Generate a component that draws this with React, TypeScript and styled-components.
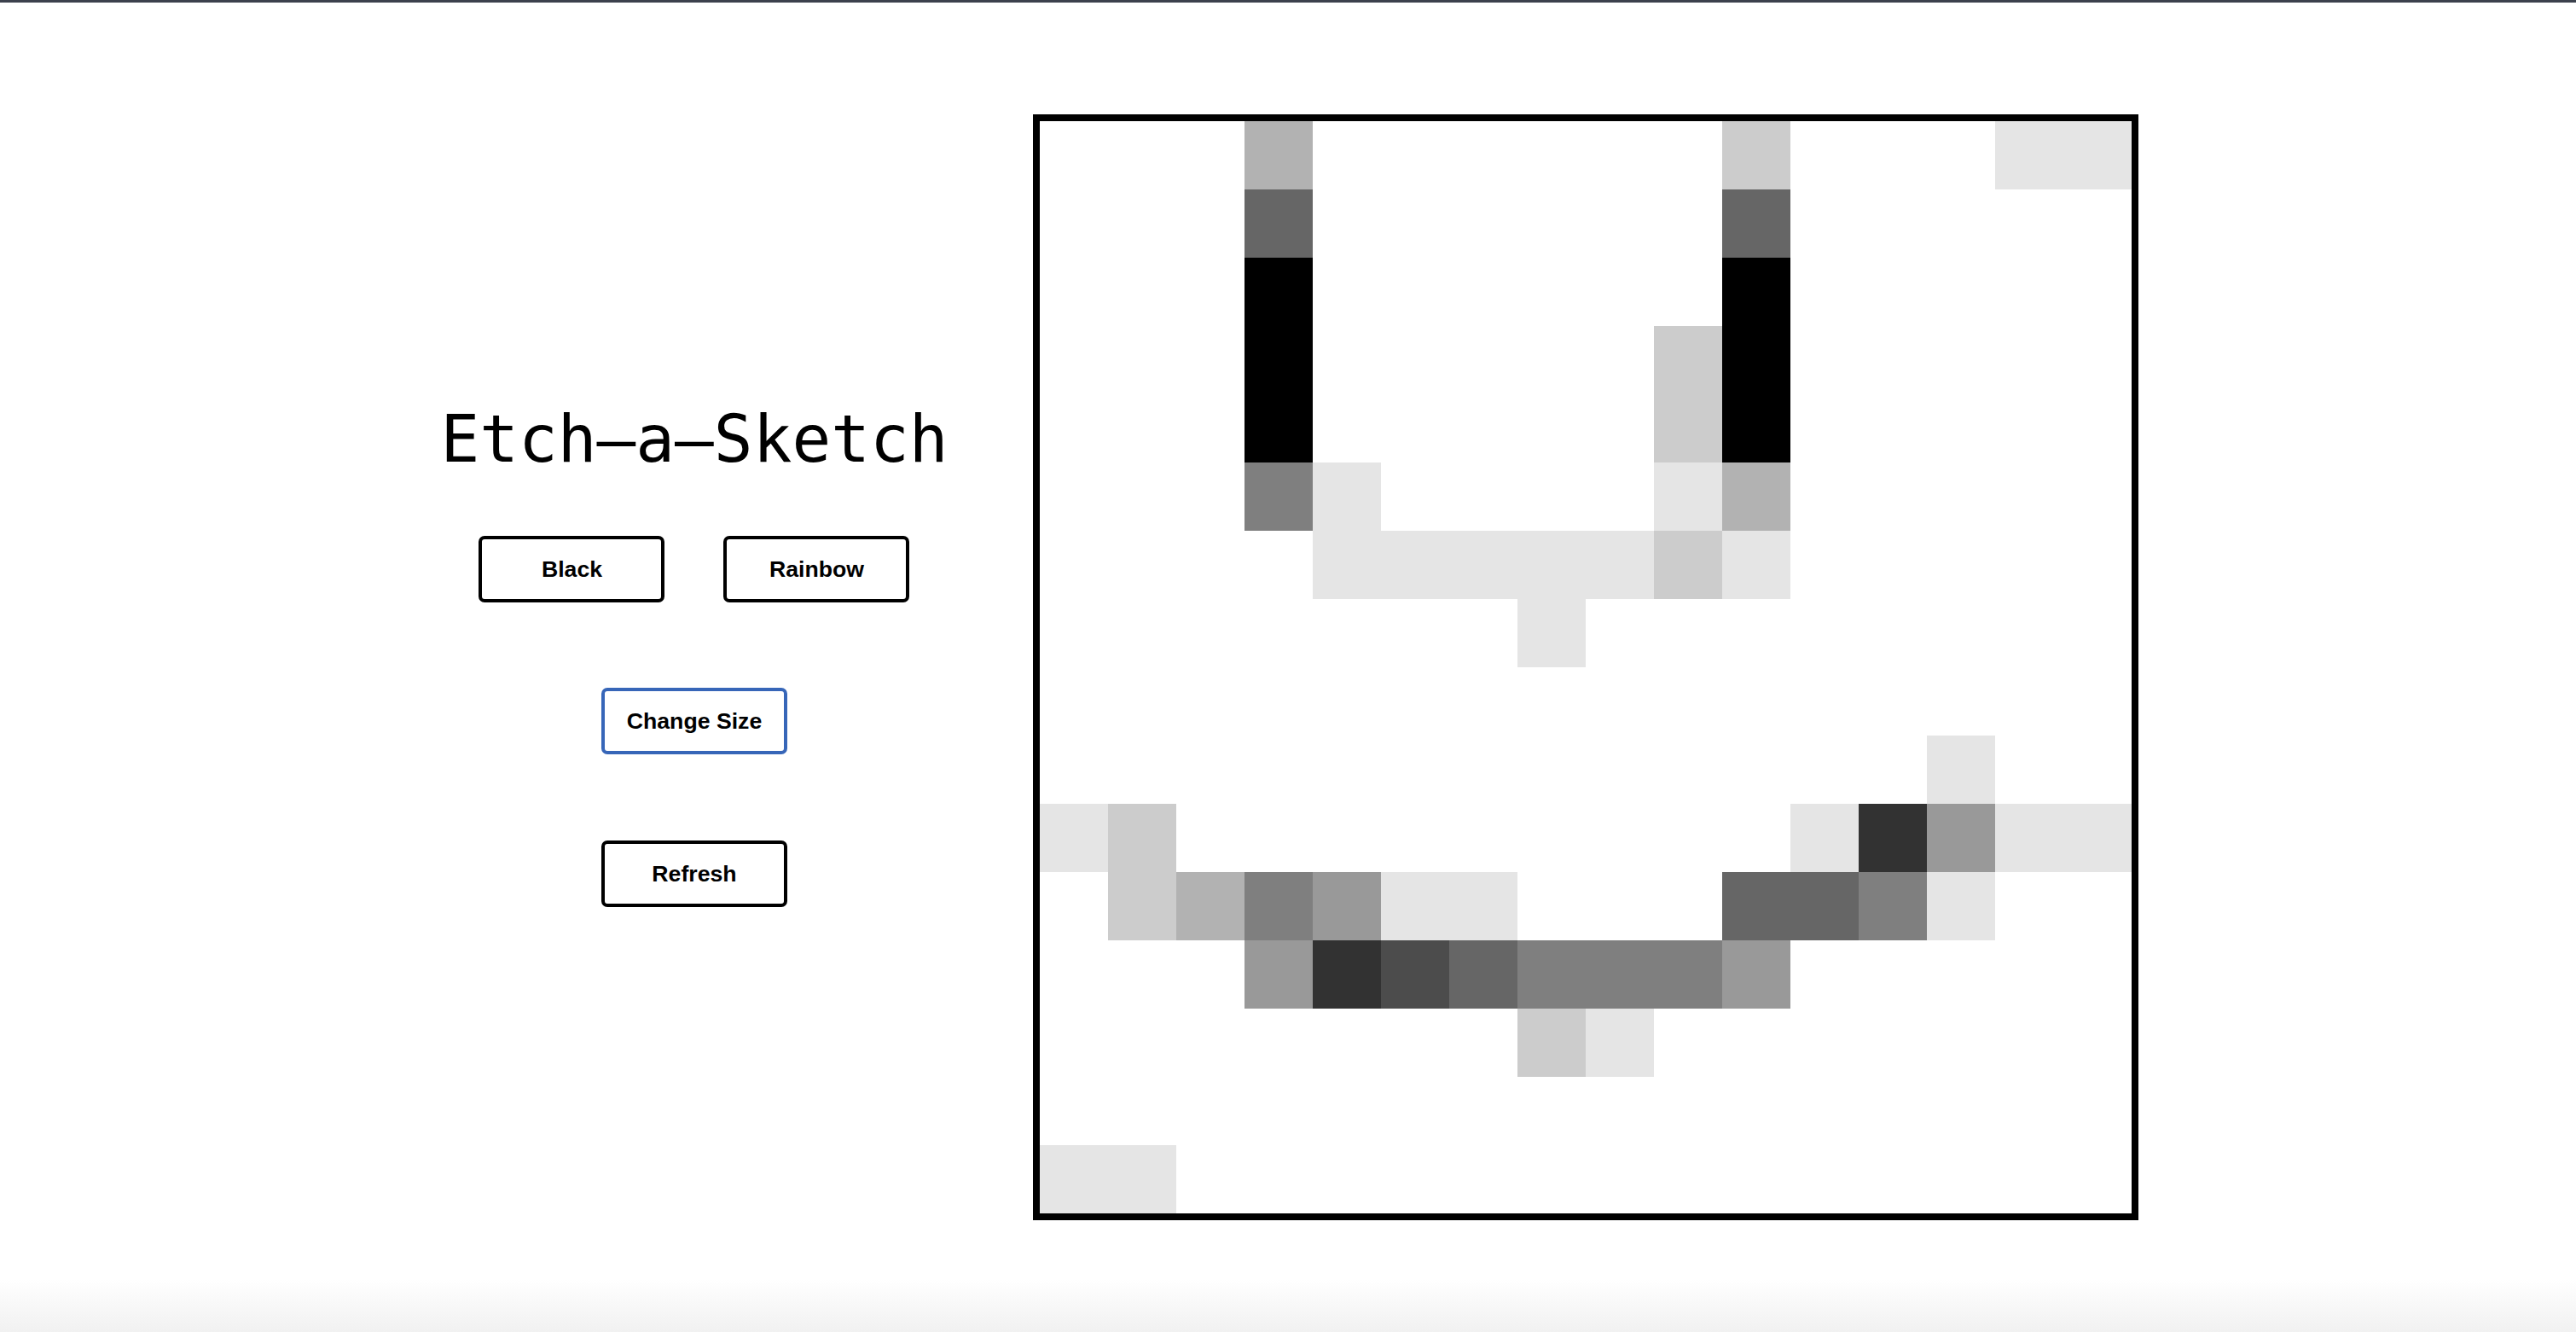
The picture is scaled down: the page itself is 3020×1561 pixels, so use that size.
import React from "react";
import styled, { createGlobalStyle } from "styled-components";

const GlobalStyle = createGlobalStyle`
  html, body {
    margin: 0;
    padding: 0;
    background: #ffffff;
  }
  * {
    box-sizing: border-box;
  }
`;

const Page = styled.div`
  min-height: 100vh;
  display: flex;
  flex-direction: column;
  background: linear-gradient(
    to bottom,
    #ffffff 0,
    #ffffff calc(100% - 62px),
    #f1f1f1 100%
  );
`;

const TopEdge = styled.div`
  height: 3px;
  background: #3c414d;
  flex-shrink: 0;
`;

const Main = styled.main`
  flex: 1;
  display: flex;
  align-items: center;
  justify-content: center;
  gap: 100px;
`;

const Controls = styled.section`
  display: flex;
  flex-direction: column;
  align-items: center;
  padding: 0 0 30px 4px;
`;

const Title = styled.h1`
  margin: 0 0 69px;
  font-family: "DejaVu Sans Mono", monospace;
  font-weight: 400;
  font-size: 76px;
  line-height: 88px;
  color: #000;
  white-space: nowrap;
`;

const ModeRow = styled.div`
  display: flex;
  gap: 69px;
  margin-bottom: 100px;
`;

const Button = styled.button<{ $focused?: boolean; $spaced?: boolean }>`
  width: 218px;
  height: 78px;
  padding: 0;
  background: #ffffff;
  border: 4px solid ${(p) => (p.$focused ? "#3766b8" : "#000000")};
  border-radius: 7px;
  font-family: "Liberation Sans", Arial, sans-serif;
  font-weight: 700;
  font-size: 26.67px;
  color: #000;
  cursor: pointer;
  margin-bottom: ${(p) => (p.$spaced ? "101px" : "0")};
`;

const Board = styled.div`
  display: grid;
  grid-template-columns: repeat(16, 80px);
  grid-template-rows: repeat(16, 80px);
  border: 8px solid #000;
  box-sizing: content-box;
  background: #ffffff;
`;

const Cell = styled.div<{ $level: number }>`
  background: ${(p) => {
    const v = Math.floor(255 * (1 - p.$level / 10));
    return `rgb(${v}, ${v}, ${v})`;
  }};
`;

const ROWS = [
  "0003000000200011",
  "0006000000600000",
  "000A000000A00000",
  "000A000002A00000",
  "000A000002A00000",
  "0005100001300000",
  "0000111112100000",
  "0000000100000000",
  "0000000000000000",
  "0000000000000100",
  "1200000000018411",
  "0235411000665100",
  "0004876555400000",
  "0000000210000000",
  "0000000000000000",
  "1100000000000000",
];

export default function App() {
  return (
    <>
      <GlobalStyle />
      <Page>
        <TopEdge />
        <Main>
          <Controls>
            <Title>Etch–a–Sketch</Title>
            <ModeRow>
              <Button>Black</Button>
              <Button>Rainbow</Button>
            </ModeRow>
            <Button $focused $spaced>
              Change Size
            </Button>
            <Button>Refresh</Button>
          </Controls>
          <Board>
            {ROWS.flatMap((row, r) =>
              row.split("").map((ch, c) => (
                <Cell key={`${r}-${c}`} $level={parseInt(ch, 16)} />
              ))
            )}
          </Board>
        </Main>
      </Page>
    </>
  );
}
